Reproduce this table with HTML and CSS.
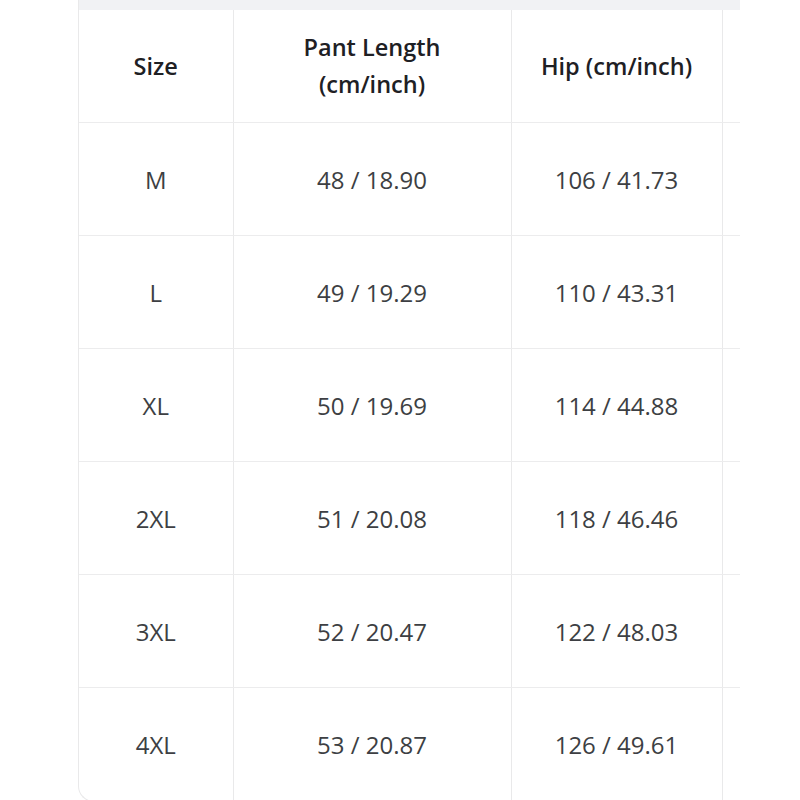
FILE: index.html
```html
<!DOCTYPE html>
<html>
<head>
<meta charset="utf-8">
<link rel="stylesheet" href="styles.css">
</head>
<body>
<div class="frame">
  <div class="band"></div>
  <table class="size-table">
    <colgroup>
      <col class="c1"><col class="c2"><col class="c3"><col class="c4">
    </colgroup>
    <thead>
      <tr><th>Size</th><th>Pant Length<br>(cm/inch)</th><th>Hip (cm/inch)</th><th></th></tr>
    </thead>
    <tbody>
      <tr><td>M</td><td>48 / 18.90</td><td>106 / 41.73</td><td></td></tr>
      <tr><td>L</td><td>49 / 19.29</td><td>110 / 43.31</td><td></td></tr>
      <tr><td>XL</td><td>50 / 19.69</td><td>114 / 44.88</td><td></td></tr>
      <tr><td>2XL</td><td>51 / 20.08</td><td>118 / 46.46</td><td></td></tr>
      <tr><td>3XL</td><td>52 / 20.47</td><td>122 / 48.03</td><td></td></tr>
      <tr><td>4XL</td><td>53 / 20.87</td><td>126 / 49.61</td><td></td></tr>
    </tbody>
  </table>
</div>
</body>
</html>
```

FILE: styles.css
```css
html, body {
  margin: 0;
  padding: 0;
  background: #ffffff;
  height: 800px;
  overflow: hidden;
}
.frame {
  margin-left: 78px;
  width: 662px;
  height: 802px;
  overflow: hidden;
  border-left: 1px solid #e9e9ea;
  border-bottom: 1px solid #e9e9ea;
  border-bottom-left-radius: 16px;
  box-sizing: border-box;
  background: #ffffff;
}
.band {
  height: 10px;
  background: #f1f2f4;
}
.size-table {
  border-collapse: collapse;
  table-layout: fixed;
  width: 900px;
  font-family: "Open Sans", "Noto Sans", sans-serif;
}
.c1 { width: 154px; }
.c2 { width: 278px; }
.c3 { width: 211px; }
.c4 { width: 257px; }
.size-table th,
.size-table td {
  border-right: 1px solid #e9e9ea;
  border-bottom: 1px solid #ececed;
  text-align: center;
  vertical-align: middle;
  padding: 0;
}
.size-table th {
  height: 112px;
  font-size: 23.5px;
  font-weight: 600;
  line-height: 37px;
  color: #1e2024;
}
.size-table td {
  height: 112px;
  font-size: 24px;
  color: #3d3f43;
}
```
